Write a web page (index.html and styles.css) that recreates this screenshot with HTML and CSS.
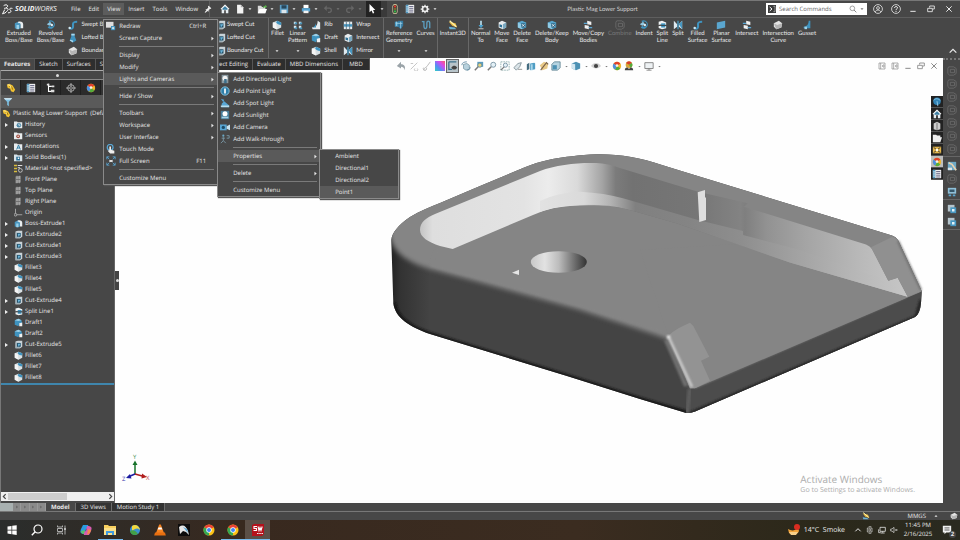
FILE: index.html
```
<!DOCTYPE html>
<html lang="en">
<head>
<meta charset="utf-8">
<title>Plastic Mag Lower Support</title>
<link rel="stylesheet" href="styles.css">
</head>
<body>
<svg class="defs" aria-hidden="true">
  <symbol id="caret" viewBox="0 0 12 12"><path d="M3 4.500h6L6 8z" fill="currentColor"/></symbol>
  <symbol id="arrow" viewBox="0 0 12 12"><path d="M3.500 1.500v9L9 6z" fill="currentColor"/></symbol>
  <symbol id="pin" viewBox="0 0 12 12"><path d="M7 1l4 4-1 1-1-.3L7 8v2L5.500 9 2 11.500 1 11l2.500-3L2 6.500h2L6.300 4 6 2z" fill="#eee"/></symbol>
  <symbol id="home" viewBox="0 0 12 12"><path d="M6 1L1 6l1 .7V11h3V7.500h2V11h3V6.700L11 6z" fill="#e8eef2"/><path d="M3 5.500L6 2.800l3 2.700V7H3z" fill="#3d7fa3"/><path d="M1 6l5-5 5 5" fill="none" stroke="#fff"/></symbol>
  <symbol id="new" viewBox="0 0 12 12"><path d="M2.500 1h4.500l3 3v7.500H2.500z" fill="#f4f4f4"/><path d="M7 1v3h3z" fill="#aaa"/></symbol>
  <symbol id="open" viewBox="0 0 12 12"><path d="M1 2h4l1 1.500h4V11H1z" fill="#d8d8d8"/><path d="M3 6h9l-2 5H1z" fill="#fff"/><path d="M7 5c0-2 1-3 3-3V.8L12 3 10 5V4C9 4 8 4.300 7 5z" fill="#58b04a"/></symbol>
  <symbol id="save" viewBox="0 0 12 12"><path d="M1 1h10v10H1z" fill="#5d9dc4"/><path d="M3 1.500h6v4H3z" fill="#27475c"/><path d="M3 7h6v4H3z" fill="#dce6ec"/></symbol>
  <symbol id="print" viewBox="0 0 12 12"><path d="M3 1h6v4H3z" fill="#fff"/><path d="M1 5h10v4H1z" fill="#58a6d4"/><path d="M3 8h6v3H3z" fill="#f4f4f4"/></symbol>
  <symbol id="undo" viewBox="0 0 12 12"><path d="M3 5h4.500a2.500 2.500 0 010 5H6" fill="none" stroke="#666" stroke-width="1.500"/><path d="M4.500 1.500v7L1 5z" fill="#666"/></symbol>
  <symbol id="redo" viewBox="0 0 12 12"><path d="M9 5H4.500a2.500 2.500 0 000 5H6" fill="none" stroke="#666" stroke-width="1.500"/><path d="M7.500 1.500v7L11 5z" fill="#666"/></symbol>
  <symbol id="cursor" viewBox="0 0 12 12"><path d="M3 0v10l2.500-2.300L7 11.500l1.700-.8L7.300 7.200H10z" fill="#fff"/></symbol>
  <symbol id="traffic" viewBox="0 0 12 12"><rect x="3" width="6" height="12" rx="3" fill="#e9dfae"/><rect x="3.800" y=".8" width="4.400" height="10.400" rx="2" fill="#333"/><circle cx="6" cy="3" r="1.400" fill="#e23b2e"/><circle cx="6" cy="6" r="1.200" fill="#8c7a30"/><circle cx="6" cy="9" r="1.400" fill="#39b54a"/></symbol>
  <symbol id="list" viewBox="0 0 12 12"><path d="M1 1h10v10H1z" fill="#f1f1f1"/><path d="M1 1h3v10H1z" fill="#4b94bd"/><path d="M5 3h5M5 5.200h5M5 7.400h5M5 9.600h5" stroke="#557"/><path d="M1.500 3.500h2M1.500 6h2M1.500 8.500h2" stroke="#fff"/></symbol>
  <symbol id="gear" viewBox="0 0 12 12"><circle cx="6" cy="6" r="3" fill="none" stroke="#f0f0f0" stroke-width="2"/><path d="M6 .8v2M6 9.200v2M.8 6h2M9.200 6h2M2.300 2.300l1.400 1.400M8.300 8.300l1.400 1.400M2.300 9.700l1.400-1.400M8.300 3.700l1.400-1.400" stroke="#f0f0f0" stroke-width="1.500"/></symbol>
  <symbol id="prompt" viewBox="0 0 12 12"><path d="M0 0h12v12H0z" fill="#3b3b3b"/><path d="M2.500 3L6 6 2.500 9" fill="none" stroke="#fff" stroke-width="1.500"/><path d="M8 2h2.500v8H8" fill="none" stroke="#bbb"/></symbol>
  <symbol id="search" viewBox="0 0 12 12"><circle cx="5" cy="5" r="3.500" fill="none" stroke="currentColor"/><path d="M7.500 7.500L11 11" stroke="currentColor" stroke-width="1.300"/></symbol>
  <symbol id="user" viewBox="0 0 12 12"><circle cx="6" cy="6" r="5.300" fill="none" stroke="#e4e4e4"/><circle cx="6" cy="4.800" r="1.700" fill="none" stroke="#e4e4e4"/><path d="M2.700 9.500C3.500 6.600 8.500 6.600 9.300 9.500" fill="none" stroke="#e4e4e4"/></symbol>
  <symbol id="help" viewBox="0 0 12 12"><circle cx="6" cy="6" r="5.300" fill="none" stroke="#e4e4e4"/><path d="M4.300 4.800c0-2.400 3.500-2.200 3.500-.3C7.800 5.800 6 5.800 6 7.300M6 8.300v1.200" fill="none" stroke="#f4f4f4" stroke-width="1.200"/></symbol>
  <symbol id="min" viewBox="0 0 12 12"><path d="M2 9.500h8" stroke="currentColor" stroke-width="1.500"/></symbol>
  <symbol id="restore" viewBox="0 0 12 12"><path d="M4 4V1.500h7V6H8.500M1 5h7v5H1z" fill="none" stroke="currentColor" stroke-width="1.300"/></symbol>
  <symbol id="close" viewBox="0 0 12 12"><path d="M2 2l8 8M10 2l-8 8" stroke="currentColor" stroke-width="1.500"/></symbol>
  <symbol id="dock" viewBox="0 0 12 12"><path d="M1.500 1.500h9v9h-9zM4 1.500v9M9 4L6 6l3 2z" fill="none" stroke="currentColor"/></symbol>

  <symbol id="extrude" viewBox="0 0 12 12"><path d="M1 4l4-2 3 1v7l-3 1-4-1z" fill="#4b97c0"/><path d="M5 2c4-1 6 1 6 3v5H8V6C8 4 7 3 5 4z" fill="#e9eef0"/><path d="M3 6h3v5H3z" fill="#9bd0e8"/></symbol>
  <symbol id="revolve" viewBox="0 0 12 12"><path d="M3 1a5 5 0 11-1 8l2-2a3 3 0 10 0-4z" fill="#3f93bf"/><path d="M1 5l4-3 2 3-3 2z" fill="#8fc7e2"/><circle cx="7" cy="6" r="1.500" fill="#dcecf4"/></symbol>
  <symbol id="swept" viewBox="0 0 12 12"><path d="M2 10c5 2 4-3 4-5 0-3 2-3 5-3" fill="none" stroke="#3f93bf" stroke-width="2.500"/><circle cx="2" cy="9.500" r="1.500" fill="#cde7f2"/></symbol>
  <symbol id="loft" viewBox="0 0 12 12"><path d="M4 1h4v3l2 5-4 2.500L2 9l2-5z" fill="#3f93bf"/><path d="M4 1h4v2H4zM3 8l3 1v2.500L2 9z" fill="#a9d6ea"/></symbol>
  <symbol id="boundary" viewBox="0 0 12 12"><path d="M1 4l6-3 4 3-1 5-6 2-3-3z" fill="#e4e4e4"/><path d="M1 4l4 2 6-2-1 5-6 2z" fill="#b5b5b5"/></symbol>
  <symbol id="cut" viewBox="0 0 12 12"><path d="M2 2l3-1h6v8l-3 2H2z" fill="#c9d3d8"/><path d="M2 3.500h6V11H2z" fill="#9fb0b8"/><path d="M4 4h5v5H4z" fill="#25526b"/><path d="M5 5h4L6 9z" fill="#6cb6db"/></symbol>
  <symbol id="fillet" viewBox="0 0 12 12"><path d="M1 3l5-2 5 2v6l-5 2.500L1 9z" fill="#d9e0e3"/><path d="M6 1l5 2v3C8 6 6 5 5 3z" fill="#3f93bf"/><path d="M1 3l4 1 1 7.500L1 9z" fill="#f4f4f4"/></symbol>
  <symbol id="pattern" viewBox="0 0 12 12"><path d="M1 2h3v3H1zM7 2h3v3H7zM1 7h3v3H1zM7 7h3v3H7z" fill="#d6e7ef"/><path d="M2 3h3v2H2zM8 3h3v2H8zM2 9h3v2H2zM8 9h3v2H8z" fill="#4794bb"/></symbol>
  <symbol id="rib" viewBox="0 0 12 12"><path d="M8 1l3 2v8H2L1 9c5 0 7-3 7-8z" fill="#e6ecef"/><path d="M6 4v5H2c2-1 3-2 4-5z" fill="#3f93bf"/></symbol>
  <symbol id="draft" viewBox="0 0 12 12"><path d="M1 3l5-2 4 2 1 6-4-1-1 3-5-2z" fill="#3f93bf"/><path d="M7 7l4-1v5H7z" fill="#f0f0f0"/><path d="M1 3l5-2 4 2-4 1z" fill="#9fd0e6"/></symbol>
  <symbol id="wrap" viewBox="0 0 12 12"><path d="M1 2h10v9H1z" fill="#e6ecef"/><path d="M1 5h10v3H1z" fill="#4898c2"/><path d="M4 2v9M8 2v9" stroke="#4f6f80"/></symbol>
  <symbol id="mirror" viewBox="0 0 12 12"><path d="M1 1l4 4v3l-4 3zM11 1L7 5v3l4 3z" fill="#dfeaf0"/><path d="M6 1v10" stroke="#49a0cc" stroke-width="1.500"/><path d="M7 5l4-4v10z" fill="#4898c2"/></symbol>
  <symbol id="refgeo" viewBox="0 0 12 12"><path d="M1 2h6v6H1z" fill="#4898c2"/><path d="M5 1h6v6l-3 4-3-3z" fill="#3479a0"/><path d="M3 2v5M8 2v8M2 4h8" stroke="#9fd0e6"/></symbol>
  <symbol id="curve" viewBox="0 0 12 12"><path d="M1 2h2.500v5c0 4.500 3.500 4.500 3.500 0V4c0-3.500 3.500-3.500 3.500 0v6" fill="none" stroke="#5c9cbd" stroke-width="1.600"/></symbol>
  <symbol id="instant" viewBox="0 0 12 12"><path d="M1 2l8 2 2 5-6-2z" fill="#e6b83c"/><path d="M2 1l8 7" stroke="#fff2b0" stroke-width="1.500"/><path d="M1 8l7 1 2 2H2z" fill="#6ab0d4"/></symbol>
  <symbol id="normal" viewBox="0 0 12 12"><path d="M6 1v7" stroke="#b9dff0" stroke-width="2"/><path d="M3 6l3 4 3-4z" fill="#49a0cc"/><path d="M3 10.500h6" stroke="#ddd"/></symbol>
  <symbol id="cube" viewBox="0 0 12 12"><path d="M2 3l4-2 5 2v6l-4 2-5-2z" fill="#e8ecee"/><path d="M7 5l4-2v6l-4 2z" fill="#7ba9c0"/><path d="M3 5l3 1v3L3 8z" fill="#2c6f94"/></symbol>
  <symbol id="bluecube" viewBox="0 0 12 12"><path d="M1 3l5-2 5 2v6l-5 2-5-2z" fill="#57a5cc"/><path d="M1 3l5 2v6L1 9z" fill="#8fcbe6"/><path d="M5 4h5v5H5z" fill="#2b617f"/><path d="M6 5l3 3M9 5L6 8" stroke="#fff"/></symbol>
  <symbol id="move" viewBox="0 0 12 12"><path d="M5 1l5 1v4L5 5zM2 6l5 1v4L2 10z" fill="#f0f0f0"/><path d="M1 4h4M7 9h4" stroke="#58a6d4" stroke-width="1.500"/></symbol>
  <symbol id="split" viewBox="0 0 12 12"><path d="M2 2l4-1 5 2v3L6 5l-4 1zM2 7l4-1 5 1v3L6 11 2 9.500z" fill="#eef2f4"/><path d="M5 4h5v5H5z" fill="#3f93bf"/><path d="M2 6.500h9" stroke="#333"/></symbol>
  <symbol id="planar" viewBox="0 0 12 12"><path d="M1 3l10-2v8L1 11z" fill="#5aa6cf"/></symbol>
  <symbol id="gusset" viewBox="0 0 12 12"><path d="M8 1h2v9H2V8c4 0 6-3 6-7z" fill="#3f93bf"/><path d="M3 8h3v3H3z" fill="#9fd0e6"/></symbol>

  <symbol id="part" viewBox="0 0 12 12"><path d="M1 2l3-1 4 2 3 5-2 3-3-1-1-3-3-1z" fill="#f1c232"/><path d="M4 4l3 1 1 3" fill="none" stroke="#8a6200"/><path d="M2 2l3 1 1 3" fill="none" stroke="#fff3a8"/></symbol>
  <symbol id="config" viewBox="0 0 12 12"><path d="M3 1v9h3M3 4h4" fill="none" stroke="#fff" stroke-width="1.300"/><path d="M7 3h3v2H7zM6 8h4v3H6zM1 1h3v2H1z" fill="#ddd"/></symbol>
  <symbol id="target" viewBox="0 0 12 12"><circle cx="6" cy="6" r="4" fill="none" stroke="#bbb"/><path d="M6 0v12M0 6h12" stroke="#bbb"/><circle cx="6" cy="6" r="1.500" fill="#333" stroke="#ccc" stroke-width=".6"/></symbol>
  <symbol id="wheel" viewBox="0 0 12 12"><circle cx="6" cy="6" r="5" fill="#f0b62c"/><path d="M6 6L2 3a5 5 0 018 0z" fill="#e2402c"/><path d="M6 6L2 3a5 5 0 002 7.600z" fill="#4c8fe0"/><path d="M6 6l-2 4.600a5 5 0 006-2z" fill="#52ad3c"/><circle cx="6" cy="5.500" r="1.600" fill="#f4f4e8"/></symbol>
  <symbol id="filter" viewBox="0 0 12 12"><path d="M1 1.500h10L7 6v5L5 9.500V6z" fill="#7fc0e2"/><path d="M1 1.500h10L9.500 3h-7z" fill="#e2f2fa"/></symbol>
  <symbol id="history" viewBox="0 0 12 12"><path d="M0 2h4l1 1h6v8H0z" fill="#e8ecee"/><circle cx="6.500" cy="7" r="3" fill="#4c88a8"/><path d="M6.500 5v2h2" fill="none" stroke="#fff"/></symbol>
  <symbol id="sensor" viewBox="0 0 12 12"><path d="M0 2h4l1 1h6v8H0z" fill="#e8ecee"/><circle cx="5.500" cy="7" r="2.500" fill="#a04a3c"/><circle cx="5.500" cy="7" r="1" fill="#fff"/></symbol>
  <symbol id="annot" viewBox="0 0 12 12"><path d="M0 2h4l1 1h6v8H0z" fill="#e8ecee"/><path d="M3.500 10L6 4l2.500 6M4.500 8h3" fill="none" stroke="#2f7ea8" stroke-width="1.300"/></symbol>
  <symbol id="bodies" viewBox="0 0 12 12"><path d="M0 2h4l1 1h6v8H0z" fill="#d8e4ea"/><path d="M3 5h5v5H3z" fill="#2b6f96"/><path d="M5 6h2v2H5z" fill="#fff"/></symbol>
  <symbol id="material" viewBox="0 0 12 12"><path d="M0 2h4M0 6h4M0 10h4" stroke="#d8bb3c" stroke-width="2"/><path d="M5 2h6M5 5h3" stroke="#ddd" stroke-width="1.500"/><circle cx="8.500" cy="8.500" r="2.500" fill="none" stroke="#ddd"/></symbol>
  <symbol id="plane" viewBox="0 0 12 12"><path d="M2 2l7-1v9l-7 1z" fill="#8a8a8a"/><path d="M4 1v10M7 1v10" stroke="#bbb"/><path d="M2 6h7" stroke="#666"/></symbol>
  <symbol id="origin" viewBox="0 0 12 12"><path d="M2 1v8h9" fill="none" stroke="#aaa" stroke-width="1.200"/><circle cx="2" cy="9" r="1.800" fill="#555" stroke="#bbb"/></symbol>

  <symbol id="redraw" viewBox="0 0 12 12"><path d="M0 1h9v7H0z" fill="#dedede"/><path d="M6 6h5v5H6z" fill="#3f93bf"/><path d="M7 8.500h3M8.500 7v3" stroke="#fff"/></symbol>
  <symbol id="touch" viewBox="0 0 12 12"><circle cx="5" cy="4" r="3.500" fill="none" stroke="#58a6d4" stroke-width="1.500"/><path d="M4 3h2v4l4 1v3.500H5L2 8l2-.5z" fill="#eee"/></symbol>
  <symbol id="full" viewBox="0 0 12 12"><path d="M1 4V1h3M8 1h3v3M11 8v3H8M4 11H1V8M1 1l3 3M11 1L8 4M1 11l3-3M11 11L8 8" fill="none" stroke="#58a6d4"/><path d="M4 5h4v2H4z" fill="#fff"/></symbol>
  <symbol id="light" viewBox="0 0 12 12"><path d="M2 1h8v10H2z" fill="#8a9aa2"/><circle cx="6" cy="5" r="3" fill="#f2f2f2"/><path d="M5 6h3v5H5z" fill="#3c6f8c"/></symbol>
  <symbol id="point" viewBox="0 0 12 12"><circle cx="6" cy="6" r="5" fill="#2f7ea8" stroke="#8fcbe6"/><path d="M5 3h2v6H5z" fill="#fff"/></symbol>
  <symbol id="spot" viewBox="0 0 12 12"><path d="M1 1l4 1-1 3zM2 7l3-3 6 5v2H2z" fill="#58a6d4"/><path d="M1 9h10v2H1z" fill="#b7dced"/></symbol>
  <symbol id="sun" viewBox="0 0 12 12"><path d="M1 1h10v10H1z" fill="#487f9c"/><circle cx="6" cy="4.500" r="3" fill="#fff"/><path d="M2 8h8v2H2z" fill="#a7d4e8"/></symbol>
  <symbol id="camera" viewBox="0 0 12 12"><path d="M0 3h8v7H0z" fill="#58a6d4"/><path d="M8 5l4-2v7L8 8z" fill="#c7e2ee"/><circle cx="4" cy="6.500" r="2" fill="#1e4c66"/></symbol>
  <symbol id="walk" viewBox="0 0 12 12"><circle cx="4" cy="2" r="1.300" fill="#6aa8c6"/><path d="M4 4v4l-3 3M4 8l3 3M2 5h4M8 2h3v3H8" fill="none" stroke="#7d9dad"/></symbol>

  <symbol id="h-arrow" viewBox="0 0 12 12"><path d="M1 6l5-5v3c4 0 6 3 4 7 0-3-2-4-4-4v2z" fill="#9aa3a8"/></symbol>
  <symbol id="h-line" viewBox="0 0 12 12"><path d="M2 10L10 2M2 3h3M7 9a2 2 0 103 0" fill="none" stroke="#bcbcbc"/></symbol>
  <symbol id="h-edge" viewBox="0 0 12 12"><path d="M2 11c1-4 4-3 5-6l3-4M2 8a2 2 0 103 0" fill="none" stroke="#bcbcbc" stroke-width="1.200"/></symbol>
  <symbol id="h-rainbow" viewBox="0 0 12 12"><path d="M0 0h12v12H0z" fill="url(#g-hue)"/></symbol>
  <symbol id="h-view" viewBox="0 0 12 12"><path d="M1 1v9h4M1 1h9" fill="none" stroke="#3a6f8a" stroke-width="1.500"/><path d="M4 8c2-3 5-3 7 0-2 3-5 3-7 0z" fill="#444"/></symbol>
  <symbol id="h-rotate" viewBox="0 0 12 12"><path d="M3 4l4-1 3 2v5l-4 1-3-2z" fill="#b8d2de" stroke="#6a8c9c" stroke-width=".8"/><path d="M1 5c0-3 3-4 6-4M11 7c0 3-2 4-4 4" fill="none" stroke="#5c87a0"/></symbol>
  <symbol id="h-zoomsel" viewBox="0 0 12 12"><path d="M4 1h7v6H4z" fill="#5a9dc0"/><circle cx="7" cy="5" r="2.500" fill="#e6d27a" stroke="#5c87a0"/><path d="M5 7l-4 4" stroke="#7a7a7a" stroke-width="1.800"/></symbol>
  <symbol id="h-zoom" viewBox="0 0 12 12"><circle cx="7.500" cy="4.500" r="3" fill="#e4f0f6" stroke="#6f8c9c"/><path d="M5 7l-4 4" stroke="#7a7a7a" stroke-width="1.800"/></symbol>
  <symbol id="h-area" viewBox="0 0 12 12"><path d="M1 1h10v10H1z" fill="none" stroke="#8aa" stroke-dasharray="2 1"/><circle cx="6.500" cy="5" r="2.500" fill="#e4f0f6" stroke="#6f8c9c"/><path d="M5 7l-4 4" stroke="#777" stroke-width="1.500"/></symbol>
  <symbol id="h-prev" viewBox="0 0 12 12"><path d="M1 8l5-5 4-1-2 5-4 4z" fill="#dbe4e8" stroke="#7b8c94"/><path d="M6 10h5" stroke="#888"/></symbol>
  <symbol id="h-section" viewBox="0 0 12 12"><path d="M1 4l3-2v8l-3 1z" fill="#456c80"/><path d="M5 3l5-1 1 1v7l-6 1z" fill="#4f9dc4"/><path d="M6 4h2v7H6z" fill="#a9d6ea"/></symbol>
  <symbol id="h-measure" viewBox="0 0 12 12"><path d="M1 5l5-4 5 2-1 6-6 2z" fill="#e8c987"/><path d="M2 11l7-9 2 2" fill="none" stroke="#77614a" stroke-width="1.300"/></symbol>
  <symbol id="h-box" viewBox="0 0 12 12"><path d="M1 4l3-3h7v7l-3 3H1z" fill="#b5d3e0" stroke="#47707f" stroke-width=".8"/><path d="M2 5h5v5H2z" fill="#4c91b3"/></symbol>
  <symbol id="h-shade" viewBox="0 0 12 12"><path d="M1 3l5-2 5 2v6l-5 2-5-2z" fill="#4c91b3"/><path d="M1 3l4 1v7L1 9z" fill="#d3e7f0"/></symbol>
  <symbol id="h-eye" viewBox="0 0 12 12"><path d="M0 6c3-5 9-5 12 0-3 4-9 4-12 0z" fill="#d0d0d0"/><circle cx="6" cy="6" r="2.500" fill="#444"/></symbol>
  <symbol id="h-scene" viewBox="0 0 12 12"><circle cx="6" cy="4.500" r="4" fill="#d9a83a"/><path d="M6 4.500L2.500 2.500a4 4 0 017 0z" fill="#d8402c"/><path d="M6 4.500l3.500-2a4 4 0 01-1.500 5.500z" fill="#52ad3c"/><path d="M1 11c0-4 4-4 5-1 1-3 5-3 5 1z" fill="#444"/></symbol>
  <symbol id="h-screen" viewBox="0 0 12 12"><path d="M1 2h10v7H1z" fill="#eef2f4" stroke="#777"/><path d="M6 9v2M3 11h6" stroke="#777"/></symbol>

  <symbol id="t-globe" viewBox="0 0 12 12"><circle cx="6" cy="5" r="4.500" fill="#3182b4"/><path d="M2 4c3-3 5-2 8 0M6 5l1 6" fill="none" stroke="#9ad0ea"/></symbol>
  <symbol id="t-folder" viewBox="0 0 12 12"><path d="M1 2h4l1 1h4v2h2l-2 6H1z" fill="#eee"/></symbol>
  <symbol id="t-books" viewBox="0 0 12 12"><path d="M2 3l4-2 4 2v7l-4 1-4-1z" fill="#ccc"/><path d="M6 2v9" stroke="#666"/></symbol>
  <symbol id="t-palette" viewBox="0 0 12 12"><path d="M1 2h10v8H1z" fill="#e0b44c"/><path d="M2 3l3 2M10 3L7 5M2 9l3-2M10 9L7 7" stroke="#333"/><circle cx="6" cy="6" r="1.500" fill="#fff"/></symbol>
  <symbol id="r-off" viewBox="0 0 12 12"><path d="M2 1h6l3 2v6l-3 2H3L1 9V3z" fill="none" stroke="#6c6c6c"/><path d="M4 4h5v4H4z" fill="none" stroke="#6c6c6c"/></symbol>
  <symbol id="r-on" viewBox="0 0 12 12"><path d="M1 1h8v8H1z" fill="#b4c4cc"/><path d="M4 4h7v7H4z" fill="#4898c2"/><path d="M6 6h3v3H6z" fill="#e4f2f8"/></symbol>
  <symbol id="r-image" viewBox="0 0 12 12"><path d="M1 1h10v10H1z" fill="#6da9c6"/><path d="M2 2l4 2 5 7" fill="none" stroke="#e8d2b0" stroke-width="2"/><path d="M1 8h5v3H1z" fill="#dce6ea"/></symbol>
  <symbol id="r-display" viewBox="0 0 12 12"><path d="M1 1h10v7H1z" fill="#8fc0d8"/><path d="M3 3h6v3H3z" fill="#35576a"/><path d="M2 9h3v2H2zM7 9h3v2H7z" fill="#5aa6cf"/></symbol>

  <symbol id="k-win" viewBox="0 0 12 12"><path d="M1.500 2.500l4-.6v3.800h-4zM6.200 1.800l4.500-.6v4.500H6.200zM1.500 6.400h4v3.800l-4-.6zM6.200 6.400h4.500v4.500l-4.500-.6z" fill="#fff"/></symbol>
  <symbol id="k-search" viewBox="0 0 12 12"><circle cx="7" cy="5" r="4" fill="none" stroke="#fff" stroke-width="1.200"/><path d="M4.200 7.800L.8 11.200" stroke="#fff" stroke-width="1.400"/></symbol>
  <symbol id="k-tasks" viewBox="0 0 12 12"><path d="M2.500 4.500h5v3h-5zM2.500 1.500V3h5V1.500M2.500 10.500V9h5v1.500M10 1.500v9" fill="none" stroke="#bbb" stroke-width=".9"/><path d="M9.200 4h1.600v2H9.200z" fill="#ccc"/></symbol>
  <symbol id="k-copilot" viewBox="0 0 12 12"><path d="M3 1h5l1 3-3 1-1 5H3C0 9 0 8 1 5z" fill="#2a9be0"/><path d="M9 11H4l-1-3 3-1 1-5h2c3 1 3 2 2 5z" fill="#d65bb0"/><path d="M1 7l4-1-1 4c-2 0-3-1-3-3z" fill="#58c26a"/><path d="M8 5l3 1-1 3-3 2z" fill="#f08c4a"/></symbol>
  <symbol id="k-folder" viewBox="0 0 12 12"><path d="M0 1h4l1 1h7v9H0z" fill="#f7cf5e"/><path d="M0 4h12v7H0z" fill="#fbe08a"/><path d="M2 7h8v4H8V9H4v2H2z" fill="#3f9ae0"/></symbol>
  <symbol id="k-idm" viewBox="0 0 12 12"><circle cx="6" cy="6" r="5" fill="#3a8fd0"/><path d="M3 2c5-3 8 2 8 4-3-3-5-1-8 1z" fill="#f3d83c"/><path d="M1 7c3-2 6 0 8 3-4 2-7 1-8-3z" fill="#43a047"/></symbol>
  <symbol id="k-vlc" viewBox="0 0 12 12"><path d="M5.200.5h1.600L10 9H2z" fill="#f58220"/><path d="M4.400 3.500h3.200l.7 2H3.700z" fill="#fff"/><path d="M1 8.500h10l.8 3H.2z" fill="#e86f10"/></symbol>
  <symbol id="k-game" viewBox="0 0 12 12"><path d="M0 0h12v12H0z" fill="#0c0c0c"/><path d="M1 3c4-3 7-1 9 4l1 4-3-3-3-1-3 3z" fill="#e6e6e6"/><path d="M5 3l4 2 1 4z" fill="#58a6d4"/></symbol>
  <symbol id="k-chrome" viewBox="0 0 12 12"><circle cx="6" cy="6" r="5.500" fill="#fbc116"/><path d="M6 6L1.200 3.300a5.500 5.500 0 019.600 0z" fill="#ea4335"/><path d="M6 6L1.200 3.300A5.500 5.500 0 006 11.500z" fill="#34a853"/><circle cx="6" cy="6" r="2.700" fill="#fff"/><circle cx="6" cy="6" r="2" fill="#4285f4"/></symbol>
  <symbol id="k-sw" viewBox="0 0 12 12"><path d="M0 1l2-1h10v10l-2 2H0z" fill="#b5121b"/><path d="M5 2.500H2v2h2.500v2H1.500M6 2.500l1 4 1-3 1 3 1.200-4" fill="none" stroke="#fff" stroke-width="1.100"/><path d="M5 9.500h6" stroke="#eee" stroke-width="1.200" stroke-dasharray="1.200 .4"/></symbol>
  <symbol id="k-weather" viewBox="0 0 12 12"><path d="M0 5c3 2 7 2 10-1l1 3c-1 4-7 5-10 2z" fill="#f2a33a"/><path d="M1 8h9l-2 3H3z" fill="#f7cf8a"/><circle cx="9" cy="3" r="3" fill="#d92c20"/></symbol>
  <symbol id="k-up" viewBox="0 0 12 12"><path d="M2 8l4-4 4 4" fill="none" stroke="#e8e8e8" stroke-width="1.500"/></symbol>
  <symbol id="k-meet" viewBox="0 0 12 12"><path d="M2 3h7v6H2zM4 1h4M4 11h4" fill="none" stroke="#ddd"/><circle cx="5.500" cy="6" r="1.500" fill="none" stroke="#ddd"/></symbol>
  <symbol id="k-net" viewBox="0 0 12 12"><path d="M3 2h8v6H3zM7 8v2M4 10.500h6M1 5v5h3" fill="none" stroke="#e4e4e4" stroke-width="1.200"/></symbol>
  <symbol id="k-mute" viewBox="0 0 12 12"><path d="M1 4.500h2L6 2v8L3 7.500H1z" fill="none" stroke="#e4e4e4"/><path d="M8 4.500l3 3M11 4.500l-3 3" stroke="#e4e4e4"/></symbol>
  <symbol id="k-note" viewBox="0 0 12 12"><path d="M1 1h10v8H5l-2 2V9H1z" fill="#f0f0f0"/><path d="M3 3.500h6M3 6h6" stroke="#444"/></symbol>
  <linearGradient id="g-hue" x1="0" y1="1" x2="1" y2="0"><stop offset="0" stop-color="#2fd0c0"/><stop offset=".35" stop-color="#5a8cf5"/><stop offset=".65" stop-color="#d04df0"/><stop offset="1" stop-color="#ff5a6c"/></linearGradient>
</svg>

<div class="app">
  <header class="titlebar">
    <div class="brand">
      <svg class="mark" viewBox="0 0 20 20" aria-hidden="true"><path d="M3 3c4-3 10-1 6 3-1 1-3 2-5 2M8 8c4 0 4 2 1 5-2 3-5 4-8 5l4-8M19 8c-5-1-6 1-4 3s2 5-4 5" fill="none" stroke="#fff" stroke-width="1.800"/></svg>
      <span class="wordmark"><b>SOLID</b>WORKS</span>
    </div>
    <nav class="menubar">
      <button>File</button>
      <button>Edit</button>
      <div class="menu-host">
        <button class="open">View</button>
        <ul class="menu menu-view">
          <li><button><svg><use href="#redraw"/></svg><span>Redraw</span><kbd>Ctrl+R</kbd></button></li>
          <li><button><span>Screen Capture</span><svg class="more"><use href="#arrow"/></svg></button></li>
          <li class="sep"></li>
          <li><button><span>Display</span><svg class="more"><use href="#arrow"/></svg></button></li>
          <li><button><span>Modify</span><svg class="more"><use href="#arrow"/></svg></button></li>
          <li><button class="active"><span>Lights and Cameras</span><svg class="more"><use href="#arrow"/></svg></button>
            <ul class="menu menu-lights">
              <li><button><svg><use href="#light"/></svg><span>Add Directional Light</span></button></li>
              <li><button><svg><use href="#point"/></svg><span>Add Point Light</span></button></li>
              <li><button><svg><use href="#spot"/></svg><span>Add Spot Light</span></button></li>
              <li><button><svg><use href="#sun"/></svg><span>Add Sunlight</span></button></li>
              <li><button><svg><use href="#camera"/></svg><span>Add Camera</span></button></li>
              <li><button><svg><use href="#walk"/></svg><span>Add Walk-through</span></button></li>
              <li class="sep"></li>
              <li><button class="active"><span>Properties</span><svg class="more"><use href="#arrow"/></svg></button>
                <ul class="menu menu-props">
                  <li><button><span>Ambient</span></button></li>
                  <li><button><span>Directional1</span></button></li>
                  <li><button><span>Directional2</span></button></li>
                  <li><button class="active"><span>Point1</span></button></li>
                </ul>
              </li>
              <li class="sep"></li>
              <li><button><span>Delete</span><svg class="more"><use href="#arrow"/></svg></button></li>
              <li class="sep"></li>
              <li><button><span>Customize Menu</span></button></li>
            </ul>
          </li>
          <li class="sep"></li>
          <li><button><span>Hide / Show</span><svg class="more"><use href="#arrow"/></svg></button></li>
          <li class="sep"></li>
          <li><button><span>Toolbars</span><svg class="more"><use href="#arrow"/></svg></button></li>
          <li><button><span>Workspace</span><svg class="more"><use href="#arrow"/></svg></button></li>
          <li><button><span>User Interface</span><svg class="more"><use href="#arrow"/></svg></button></li>
          <li><button><svg><use href="#touch"/></svg><span>Touch Mode</span></button></li>
          <li><button><svg><use href="#full"/></svg><span>Full Screen</span><kbd>F11</kbd></button></li>
          <li class="sep"></li>
          <li><button><span>Customize Menu</span></button></li>
        </ul>
      </div>
      <button>Insert</button>
      <button>Tools</button>
      <button>Window</button>
      <button class="pin" aria-label="Pin menu"><svg><use href="#pin"/></svg></button>
    </nav>
    <div class="quick">
      <button class="home" aria-label="Home"><svg><use href="#home"/></svg></button>
      <button aria-label="New"><svg><use href="#new"/></svg><svg class="drop"><use href="#caret"/></svg></button>
      <button aria-label="Open"><svg><use href="#open"/></svg><svg class="drop"><use href="#caret"/></svg></button>
      <button aria-label="Save"><svg><use href="#save"/></svg><svg class="drop"><use href="#caret"/></svg></button>
      <button aria-label="Print"><svg><use href="#print"/></svg><svg class="drop"><use href="#caret"/></svg></button>
      <button class="off" aria-label="Undo"><svg><use href="#undo"/></svg><svg class="drop"><use href="#caret"/></svg></button>
      <button class="off" aria-label="Redo"><svg><use href="#redo"/></svg><svg class="drop"><use href="#caret"/></svg></button>
      <button class="pressed" aria-label="Select"><svg><use href="#cursor"/></svg><svg class="drop"><use href="#caret"/></svg></button>
      <button class="lone" aria-label="Rebuild"><svg><use href="#traffic"/></svg></button>
      <button class="lone" aria-label="File properties"><svg><use href="#list"/></svg></button>
      <button aria-label="Options"><svg><use href="#gear"/></svg><svg class="drop"><use href="#caret"/></svg></button>
    </div>
    <h1>Plastic Mag Lower Support</h1>
    <label class="search">
      <svg><use href="#prompt"/></svg>
      <input type="text" placeholder="Search Commands" aria-label="Search Commands">
      <svg><use href="#search"/></svg><svg class="drop"><use href="#caret"/></svg>
    </label>
    <div class="window-buttons">
      <button aria-label="Account"><svg class="round"><use href="#user"/></svg></button>
      <button aria-label="Help"><svg class="round"><use href="#help"/></svg></button>
      <button aria-label="Minimize"><svg><use href="#min"/></svg></button>
      <button aria-label="Restore"><svg><use href="#restore"/></svg></button>
      <button aria-label="Close"><svg><use href="#close"/></svg></button>
    </div>
  </header>

  <section class="ribbon">
    <div class="group boss">
      <button class="tool"><svg><use href="#extrude"/></svg>Extruded<br>Boss/Base</button>
      <button class="tool"><svg><use href="#revolve"/></svg>Revolved<br>Boss/Base</button>
      <div class="stack">
        <button><svg><use href="#swept"/></svg>Swept Bos</button>
        <button><svg><use href="#loft"/></svg>Lofted Bo</button>
        <button><svg><use href="#boundary"/></svg>Boundary</button>
      </div>
    </div>
    <div class="group cuts">
      <div class="stack">
        <button><svg><use href="#cut"/></svg>Swept Cut</button>
        <button><svg><use href="#cut"/></svg>Lofted Cut</button>
        <button><svg><use href="#cut"/></svg>Boundary Cut</button>
      </div>
    </div>
    <div class="group features">
      <button class="tool"><svg><use href="#fillet"/></svg>Fillet<svg class="drop"><use href="#caret"/></svg></button>
      <button class="tool"><svg><use href="#pattern"/></svg>Linear<br>Pattern<svg class="drop"><use href="#caret"/></svg></button>
      <div class="stack">
        <button><svg><use href="#rib"/></svg>Rib</button>
        <button><svg><use href="#draft"/></svg>Draft</button>
        <button><svg><use href="#fillet"/></svg>Shell</button>
      </div>
      <div class="stack">
        <button><svg><use href="#wrap"/></svg>Wrap</button>
        <button><svg><use href="#cube"/></svg>Intersect</button>
        <button><svg><use href="#mirror"/></svg>Mirror</button>
      </div>
    </div>
    <div class="group">
      <button class="tool"><svg><use href="#refgeo"/></svg>Reference<br>Geometry<svg class="drop"><use href="#caret"/></svg></button>
      <button class="tool"><svg><use href="#curve"/></svg>Curves<svg class="drop"><use href="#caret"/></svg></button>
    </div>
    <div class="group">
      <button class="tool"><svg><use href="#instant"/></svg>Instant3D</button>
    </div>
    <div class="group last">
      <button class="tool"><svg><use href="#normal"/></svg>Normal<br>To</button>
      <button class="tool"><svg><use href="#cube"/></svg>Move<br>Face</button>
      <button class="tool"><svg><use href="#bluecube"/></svg>Delete<br>Face</button>
      <button class="tool"><svg><use href="#bluecube"/></svg>Delete/Keep<br>Body</button>
      <button class="tool"><svg><use href="#move"/></svg>Move/Copy<br>Bodies</button>
      <button class="tool off" disabled><svg><use href="#r-off"/></svg>Combine</button>
      <button class="tool"><svg><use href="#revolve"/></svg>Indent</button>
      <button class="tool"><svg><use href="#split"/></svg>Split<br>Line</button>
      <button class="tool"><svg><use href="#mirror"/></svg>Split</button>
      <button class="tool"><svg><use href="#swept"/></svg>Filled<br>Surface</button>
      <button class="tool"><svg><use href="#planar"/></svg>Planar<br>Surface</button>
      <button class="tool"><svg><use href="#move"/></svg>Intersect</button>
      <button class="tool"><svg><use href="#boundary"/></svg>Intersection<br>Curve</button>
      <button class="tool"><svg><use href="#gusset"/></svg>Gusset</button>
    </div>
    <button class="collapse" aria-label="Collapse ribbon"><svg><use href="#k-up"/></svg></button>
  </section>

  <main class="workspace">
    <nav class="feature-tabs">
      <button class="current">Features</button>
      <button>Sketch</button>
      <button>Surfaces</button>
      <button class="grow">She</button>
      <button>Direct Editing</button>
      <button>Evaluate</button>
      <button>MBD Dimensions</button>
      <button class="short">MBD</button>
    </nav>

    <aside class="panel">
      <div class="splitter"><i></i></div>
      <div class="panel-tabs">
        <button class="current" aria-label="Feature tree"><svg><use href="#part"/></svg></button>
        <button aria-label="Properties"><svg><use href="#list"/></svg></button>
        <button aria-label="Configurations"><svg><use href="#config"/></svg></button>
        <button aria-label="Dimensions"><svg><use href="#target"/></svg></button>
        <button aria-label="Display"><svg><use href="#wheel"/></svg></button>
      </div>
      <div class="filter"><svg><use href="#filter"/></svg></div>
      <ul class="tree">
        <li class="root"><svg><use href="#part"/></svg>Plastic Mag Lower Support&nbsp; (Defau</li>
        <li class="branch"><svg><use href="#history"/></svg>History</li>
        <li><svg><use href="#sensor"/></svg>Sensors</li>
        <li class="branch"><svg><use href="#annot"/></svg>Annotations</li>
        <li class="branch"><svg><use href="#bodies"/></svg>Solid Bodies(1)</li>
        <li><svg><use href="#material"/></svg>Material &lt;not specified&gt;</li>
        <li><svg><use href="#plane"/></svg>Front Plane</li>
        <li><svg><use href="#plane"/></svg>Top Plane</li>
        <li><svg><use href="#plane"/></svg>Right Plane</li>
        <li><svg><use href="#origin"/></svg>Origin</li>
        <li class="branch"><svg><use href="#extrude"/></svg>Boss-Extrude1</li>
        <li class="branch"><svg><use href="#cut"/></svg>Cut-Extrude2</li>
        <li class="branch"><svg><use href="#cut"/></svg>Cut-Extrude1</li>
        <li class="branch"><svg><use href="#cut"/></svg>Cut-Extrude3</li>
        <li><svg><use href="#fillet"/></svg>Fillet3</li>
        <li><svg><use href="#fillet"/></svg>Fillet4</li>
        <li><svg><use href="#fillet"/></svg>Fillet5</li>
        <li class="branch"><svg><use href="#cut"/></svg>Cut-Extrude4</li>
        <li class="branch"><svg><use href="#split"/></svg>Split Line1</li>
        <li><svg><use href="#draft"/></svg>Draft1</li>
        <li><svg><use href="#draft"/></svg>Draft2</li>
        <li class="branch"><svg><use href="#cut"/></svg>Cut-Extrude5</li>
        <li><svg><use href="#fillet"/></svg>Fillet6</li>
        <li><svg><use href="#fillet"/></svg>Fillet7</li>
        <li><svg><use href="#fillet"/></svg>Fillet8</li>
      </ul>
      <div class="rollback"></div>
      <div class="scrollbar">
        <svg viewBox="0 0 12 12"><path d="M8 2L4 6l4 4" fill="none" stroke="#444" stroke-width="2"/></svg>
        <i></i>
        <svg viewBox="0 0 12 12"><path d="M4 2l4 4-4 4" fill="none" stroke="#444" stroke-width="2"/></svg>
      </div>
    </aside>

    <section class="viewport">
      <svg class="model" viewBox="115 58 828 445" role="img" aria-label="Magazine lower support part">
        <defs>
          <clipPath id="body-clip"><path d="M391.300 240C392 233 398 225 410 217C420 211 430 207 440 203L480 186L523 168C540 161 560 156 597 154.300C620 154 640 157.500 662 165L683 171.500L892 235.500Q896 236.500 898 240L921.700 291L921 303Q920 314 915 317L695 411.500Q689 414 683 412L640 399L567 376L430 334C410 327 395 318 393.300 303Z"/></clipPath>
          <filter id="soft" x="-10%" y="-10%" width="120%" height="120%"><feGaussianBlur stdDeviation="2.400"/></filter>
          <filter id="soft1" x="-30%" y="-30%" width="160%" height="160%"><feGaussianBlur stdDeviation="1.100"/></filter>
          <linearGradient id="g-side" gradientUnits="userSpaceOnUse" x1="391" y1="0" x2="430" y2="0"><stop offset="0" stop-color="#222"/><stop offset=".25" stop-color="#333"/><stop offset="1" stop-color="#444"/></linearGradient>
          <linearGradient id="g-wall" gradientUnits="userSpaceOnUse" x1="420" y1="0" x2="627" y2="0"><stop offset="0" stop-color="#c4c4c4"/><stop offset=".06" stop-color="#dedede"/><stop offset=".5" stop-color="#e3e3e3"/><stop offset=".62" stop-color="#ececec"/><stop offset=".76" stop-color="#dadada"/><stop offset=".88" stop-color="#a4a4a4"/><stop offset=".945" stop-color="#7c7c7c"/><stop offset="1" stop-color="#747474"/></linearGradient>
          <linearGradient id="g-right" gradientUnits="userSpaceOnUse" x1="615" y1="0" x2="907" y2="0"><stop offset="0" stop-color="#7c7c7c"/><stop offset=".06" stop-color="#727272"/><stop offset=".28" stop-color="#767676"/><stop offset=".33" stop-color="#7a7a7a"/><stop offset=".43" stop-color="#838383"/><stop offset=".445" stop-color="#7f7f7f"/><stop offset=".52" stop-color="#929292"/><stop offset=".65" stop-color="#a4a4a4"/><stop offset=".85" stop-color="#bababa"/><stop offset="1" stop-color="#c6c6c6"/></linearGradient>
          <linearGradient id="g-ledge" gradientUnits="userSpaceOnUse" x1="540" y1="0" x2="907" y2="0"><stop offset="0" stop-color="#e2e2e2"/><stop offset=".12" stop-color="#dadada"/><stop offset=".19" stop-color="#b4b4b4"/><stop offset=".26" stop-color="#808080"/><stop offset=".4" stop-color="#848484"/><stop offset=".55" stop-color="#8e8e8e"/><stop offset=".7" stop-color="#a2a2a2"/><stop offset=".85" stop-color="#b6b6b6"/><stop offset="1" stop-color="#c6c6c6"/></linearGradient>
          <linearGradient id="g-hole"><stop offset="0" stop-color="#c8c8c8"/><stop offset=".25" stop-color="#e2e2e2"/><stop offset=".5" stop-color="#bcbcbc"/><stop offset=".8" stop-color="#696969"/><stop offset="1" stop-color="#333"/></linearGradient>
        </defs>
        <g clip-path="url(#body-clip)">
          <path d="M385 150H930V420H385z" fill="url(#g-side)"/>
          <path d="M394 303C396 318 412 328 430 334L567 376L640 399L688 413" fill="none" stroke="#181818" stroke-width="4" filter="url(#soft1)"/>
          <path d="M380 140H935V291L692 389L667 339L656 335L580 310L480 282.500L430 269C410 263 394 254 390 238z" fill="#858585" filter="url(#soft)"/>
          <path d="M691 388.500L922 291V320L690 416z" fill="#4c4c4c"/>
          <path d="M683 413L691 413L916 317L921 300" fill="none" stroke="#222" stroke-width="3" filter="url(#soft1)"/>
          <path d="M690 389L687 414" stroke="#5b5b5b" stroke-width="5" filter="url(#soft1)"/>
          <path d="M430 266.500L480 279.500L580 307L656 331L668 336L695 388.300L907 297L800 262L700 215L600 180L450 215z" fill="#858585" filter="url(#soft1)"/>
          <path d="M668.500 336.500L690 388.500L695 388.300L921.700 291.500L900 240L800 240L640 250z" fill="#858585"/>
        </g>
        <path d="M420 230C420 222 426 218 435 214L540 171C558 164 585 162 602 163.500Q610 164.500 616 166.700L628 209.500C608 204 575 204 553 208.300Q543 210.500 533 215L452.700 249L440 246C428 242 420 237 420 230z" fill="url(#g-wall)"/>
        <path d="M615 166.500L670 183.300L698 191.700L748 203.300L744 206.700L866 244.500Q870 246 872 249L888.300 280.700L897.700 277.700L907.700 296.700L790 262.500L677 223.500L627 209.300L615 206.500z" fill="url(#g-right)"/>
        <path d="M540 201Q555 193 580 191.700Q605 193 623 198.300L698 220L743 231V235L800 250L888.300 280.700L907.700 296.700L790 262.500L677 223.500L627 209.300Q605 203.500 573 205.300Q552 207 540 212z" fill="url(#g-ledge)"/>
        <path d="M697.700 192.300L705 190V197L706 198V220L699.300 222z" fill="#dedede"/>
        <path d="M871 247.300L892 237Q897 238 899 243L921.700 291L907.700 296.700L897.700 277.700L888.300 280.700z" fill="#909090"/>
        <path d="M898 241L921 290" stroke="#6f6f6f" stroke-width="2" filter="url(#soft1)"/>
        <path d="M668.300 336.700Q671 331 690 322.700L693.300 326L709.300 356.700L701 360.700L710 380.700L695 388.300L690 388z" fill="#939393"/>
        <path d="M666 340L686 386" stroke="#707070" stroke-width="4" filter="url(#soft1)"/>
        <path d="M669 338L692 387" stroke="#cfcfcf" stroke-width="2.500" filter="url(#soft1)"/>
        <circle cx="668.500" cy="337" r="1.800" fill="#f0f0f0" filter="url(#soft1)"/>
        <ellipse cx="558.800" cy="262" rx="28" ry="10.800" fill="url(#g-hole)"/>
        <path d="M512 272.700L519 269.700V275z" fill="#e6e6e6"/>
        <g class="triad">
          <path d="M135 474V463" stroke="#17722a" stroke-width="1.500"/><path d="M132.500 465L135 460.500L137.500 465z" fill="#17722a"/>
          <path d="M135 474L144 476.500" stroke="#b01c1c" stroke-width="1.500"/><path d="M142 473.500L147 477L141.500 478.500z" fill="#b01c1c"/>
          <path d="M135 474L128 477" stroke="#1c1ca0" stroke-width="1.500"/><path d="M130 474L126 478L131.500 478.500z" fill="#1c1ca0"/>
          <text x="133" y="459" fill="#3a8a48">Y</text><text x="146" y="480" fill="#b83c3c">X</text><text x="122" y="481" fill="#3838a8">Z</text>
        </g>
      </svg>
      <div class="view-tools">
        <button aria-label="Previous"><svg><use href="#h-arrow"/></svg></button>
        <button aria-label="Line"><svg><use href="#h-line"/></svg></button>
        <button aria-label="Edge"><svg><use href="#h-edge"/></svg></button>
        <button aria-label="Curvature"><svg><use href="#h-rainbow"/></svg></button>
        <button class="pressed" aria-label="View selector"><svg><use href="#h-view"/></svg></button>
        <button aria-label="Rotate"><svg><use href="#h-rotate"/></svg></button>
        <button aria-label="Zoom to selection"><svg><use href="#h-zoomsel"/></svg></button>
        <button aria-label="Zoom to fit"><svg><use href="#h-zoom"/></svg></button>
        <button aria-label="Zoom to area"><svg><use href="#h-area"/></svg></button>
        <button aria-label="Previous view"><svg><use href="#h-prev"/></svg></button>
        <button aria-label="Section view"><svg><use href="#h-section"/></svg></button>
        <button aria-label="Annotation views"><svg><use href="#h-measure"/></svg></button>
        <button class="split" aria-label="View orientation"><svg><use href="#h-box"/></svg><svg class="drop"><use href="#caret"/></svg></button>
        <button class="split" aria-label="Display style"><svg><use href="#h-shade"/></svg><svg class="drop"><use href="#caret"/></svg></button>
        <button class="split" aria-label="Hide items"><svg><use href="#h-eye"/></svg><svg class="drop"><use href="#caret"/></svg></button>
        <button aria-label="Appearance"><svg><use href="#wheel"/></svg></button>
        <button class="split" aria-label="Scene"><svg><use href="#h-scene"/></svg><svg class="drop"><use href="#caret"/></svg></button>
        <button class="split" aria-label="View settings"><svg><use href="#h-screen"/></svg><svg class="drop"><use href="#caret"/></svg></button>
      </div>
      <div class="doc-buttons">
        <button aria-label="Dock left"><svg><use href="#dock"/></svg></button>
        <button aria-label="Dock right"><svg><use href="#dock"/></svg></button>
        <button aria-label="Minimize document"><svg><use href="#min"/></svg></button>
        <button aria-label="Restore document"><svg><use href="#restore"/></svg></button>
        <button aria-label="Close document"><svg><use href="#close"/></svg></button>
      </div>
      <button class="panel-handle" aria-label="Collapse panel"><i></i></button>
      <div class="task-tabs">
        <button aria-label="3DEXPERIENCE"><svg><use href="#t-globe"/></svg></button>
        <button aria-label="Resources"><svg><use href="#home"/></svg></button>
        <button aria-label="Design library"><svg><use href="#t-books"/></svg></button>
        <button aria-label="File explorer"><svg><use href="#t-folder"/></svg></button>
        <button aria-label="View palette"><svg><use href="#t-palette"/></svg></button>
        <button class="current" aria-label="Appearances"><svg><use href="#wheel"/></svg></button>
        <button aria-label="Custom properties"><svg><use href="#list"/></svg></button>
      </div>
      <div class="watermark"><strong>Activate Windows</strong><span>Go to Settings to activate Windows.</span></div>
    </section>

    <aside class="side-tools">
      <button aria-label="Front" disabled><svg><use href="#r-off"/></svg></button>
      <button aria-label="Back" disabled><svg><use href="#r-off"/></svg></button>
      <button aria-label="Left" disabled><svg><use href="#r-off"/></svg></button>
      <button aria-label="Right" disabled><svg><use href="#r-off"/></svg></button>
      <button aria-label="Top" disabled><svg><use href="#r-off"/></svg></button>
      <button aria-label="Bottom" disabled><svg><use href="#r-off"/></svg></button>
      <button aria-label="Isometric" disabled><svg><use href="#r-off"/></svg></button>
      <hr>
      <button aria-label="Edit image"><svg><use href="#r-image"/></svg></button>
      <button aria-label="Edit" disabled><svg><use href="#r-off"/></svg></button>
      <button aria-label="Display"><svg><use href="#r-display"/></svg></button>
      <hr>
      <button aria-label="Copy"><svg><use href="#r-on"/></svg></button>
      <button aria-label="Arrange"><svg><use href="#r-on"/></svg></button>
      <hr>
    </aside>
  </main>

  <nav class="sheet-tabs">
    <span class="sheet-pad"></span>
    <div class="steps">
      <button aria-label="First"><svg><use href="#arrow"/></svg></button>
      <button aria-label="Previous"><svg><use href="#arrow"/></svg></button>
      <button aria-label="Next"><svg><use href="#arrow"/></svg></button>
      <button aria-label="Last"><svg><use href="#arrow"/></svg></button>
    </div>
    <button class="sheet current">Model</button>
    <button class="sheet">3D Views</button>
    <button class="sheet">Motion Study 1</button>
  </nav>

  <footer class="statusbar">
    <svg class="status-icon"><use href="#instant"/></svg>
    <span class="units">MMGS</span>
    <svg class="up"><use href="#caret"/></svg>
    <svg class="tag"><use href="#boundary"/></svg>
  </footer>

  <div class="taskbar">
    <div class="apps">
      <button aria-label="Start"><svg><use href="#k-win"/></svg></button>
      <button aria-label="Search"><svg><use href="#k-search"/></svg></button>
      <button aria-label="Task view"><svg><use href="#k-tasks"/></svg></button>
      <button aria-label="Copilot"><svg><use href="#k-copilot"/></svg></button>
      <button class="running" aria-label="File Explorer"><svg><use href="#k-folder"/></svg></button>
      <button aria-label="Download manager"><svg><use href="#k-idm"/></svg></button>
      <button aria-label="Media player"><svg><use href="#k-vlc"/></svg></button>
      <button aria-label="Game"><svg><use href="#k-game"/></svg></button>
      <button aria-label="Chrome"><svg><use href="#k-chrome"/></svg></button>
      <button class="running" aria-label="Chrome profile"><svg><use href="#k-chrome"/></svg></button>
      <button class="focused" aria-label="SolidWorks"><svg><use href="#k-sw"/></svg></button>
    </div>
    <div class="tray">
      <svg class="weather"><use href="#k-weather"/></svg>
      <span class="temp">14°C&nbsp; Smoke</span>
      <svg><use href="#k-up"/></svg>
      <svg><use href="#k-meet"/></svg>
      <svg><use href="#k-net"/></svg>
      <svg><use href="#k-mute"/></svg>
      <time>11:45 PM<br>2/16/2025</time>
      <button class="notes" aria-label="Notifications"><svg><use href="#k-note"/></svg><b>2</b></button>
    </div>
  </div>
</div>
</body>
</html>
```
FILE: styles.css
```
* { box-sizing: border-box; }

body {
  margin: 0;
  overflow: hidden;
  background: #474747;
  color: #e8e8e8;
  font: 6px/7px "Open Sans", "Noto Sans", sans-serif;
  text-rendering: geometricPrecision;
}

button {
  margin: 0;
  padding: 0;
  border: 0;
  background: none;
  color: inherit;
  font: inherit;
  text-rendering: inherit;
  white-space: nowrap;
}

ul { margin: 0; padding: 0; list-style: none; }
svg { display: block; flex: none; width: 10px; height: 10px; }
.defs { position: absolute; width: 0; height: 0; }
.drop { width: 8px; height: 6px; }
.off, .tool.off { color: #777; }

.app { display: flex; flex-direction: column; height: 100vh; }

/* Title bar */
.titlebar {
  position: relative;
  z-index: 10;
  display: flex;
  align-items: center;
  height: 18px;
  border-top: 1px solid #777;
  border-bottom: 1px solid #5e5e5e;
}
.brand { display: flex; align-items: center; gap: 2px; width: 67px; padding-left: 2px; }
.mark { width: 11px; height: 11px; }
.wordmark { color: #f4f4f4; font-size: 7px; font-style: italic; }
.menubar { display: flex; height: 100%; align-items: center; width: 143px; border-right: 1px solid #5e5e5e; }
.menubar > button, .menu-host > button { height: 12px; padding: 0 4px; }
.menu-host { position: relative; }
.menu-host .open { background: #5c5c5c; }
.menubar .pin { margin-left: auto; padding: 0 2px; }
.pin svg { width: 8px; height: 8px; }

.menu {
  position: absolute;
  border: 1px solid #8a8a8a;
  background: #474747;
  box-shadow: 1px 1px 1px #555;
}
.menu li { position: relative; }
.menu-view { top: 16px; left: 0; width: 115px; }
.menu-lights { top: -1px; left: 100%; width: 104px; }
.menu-props { top: -1px; left: calc(100% - 1px); width: 80px; }
.menu button { display: flex; align-items: center; width: 100%; height: 12px; padding-right: 2px; }
.menu button > svg:first-child { margin: 0 3px 0 2px; }
.menu button > span { flex: 1; text-align: left; }
.menu button > span:first-child { margin-left: 15px; }
.menu .active { background: #5a5a5a; }
.menu .more { width: 5px; height: 5px; }
.menu kbd { margin-right: 9px; font: inherit; }
.menu .sep { height: 1px; margin: 2px 3px 2px 15px; background: #7a7a7a; }

.quick { display: flex; align-items: center; gap: 2px; height: 100%; padding-left: 9px; }
.quick button { display: flex; align-items: center; width: 20px; height: 100%; padding-left: 1px; }
.quick button > svg:first-child { width: 10px; height: 10px; margin-right: 1px; }
.quick .home { width: 13px; }
.quick .lone { width: 13px; }
.quick .pressed { width: 21px; background: linear-gradient(90deg, #222 15px, #3a3a3a 15px); }
h1 { flex: 1; margin: 0; font: 6px/7px Lato, "Open Sans", sans-serif; text-align: center; color: #d0d0d0; }
.search { display: flex; align-items: center; gap: 2px; width: 101px; height: 12px; padding: 0 2px; background: #fff; color: #777; }
.search svg { width: 8px; height: 8px; }
.search .drop { width: 6px; }
.search input { flex: 1; min-width: 0; height: 10px; padding: 0 1px; border: 0; outline: 0; background: none; font: inherit; text-rendering: inherit; color: #555; }
.search input::placeholder { color: #666; opacity: 1; }
.window-buttons { display: flex; width: 93px; padding: 0 2px; }
.window-buttons button { display: grid; flex: 1; place-items: center; }
.window-buttons svg { width: 8px; height: 8px; }
.window-buttons .round { width: 10px; height: 10px; }

/* Ribbon */
.ribbon { position: relative; display: flex; height: 40px; font-family: Lato, "Open Sans", sans-serif; }
.group { display: flex; gap: 4px; padding: 0 2px; border-right: 1px solid #686868; }
.tool { position: relative; display: block; align-self: flex-start; padding-top: 2px; text-align: center; }
.tool > svg:first-child { margin: 0 auto; }
.tool .drop { position: absolute; top: 30px; left: calc(50% - 4px); }
.stack button { display: flex; align-items: center; gap: 3px; height: 13px; }
.boss { width: 216px; padding: 0 0 0 5px; border: 0; overflow: hidden; }
.cuts { width: 53px; padding: 0; }
.cuts .stack button { gap: 1px; }
.features { width: 115px; }
.features .stack { width: 28px; }
.last { border: 0; }
.collapse { margin: auto 2px 2px auto; }

/* Workspace */
.workspace { position: relative; display: grid; grid-template-columns: 115px 1fr 17px; flex: 1; min-height: 0; }
.feature-tabs {
  position: absolute;
  z-index: 2;
  top: 0;
  left: 0;
  display: flex;
  width: 370px;
  height: 12px;
  border-top: 1px solid #5c5c5c;
  background: #2e2e2e;
}
.feature-tabs button { padding: 0 4px; border-right: 1px solid #555; }
.feature-tabs .grow { flex: 1; text-align: left; }
.feature-tabs .short { width: 27px; }
.feature-tabs .current { background: #474747; font-weight: bold; }

.panel { display: flex; flex-direction: column; min-width: 0; padding-top: 12px; border-left: 1px solid #777; background: #474747; border-right: 1px solid #666; }
.splitter { display: grid; place-items: center; height: 10px; border-top: 1px solid #aaa; border-bottom: 1px solid #888; }
.splitter i, .panel-handle i { width: 3px; height: 3px; border-radius: 50%; background: #ddd; }
.panel-tabs { display: flex; height: 15px; background: #333; }
.panel-tabs button { display: grid; place-items: center; width: 20px; border-right: 1px solid #1f1f1f; background: #2b2b2b; }
.panel-tabs .current { background: #474747; }
.filter { height: 13px; padding: 2px; background: #5a5a5a; }
.tree li { position: relative; display: flex; align-items: center; gap: 2px; height: 11px; padding-left: 13px; overflow: hidden; white-space: nowrap; }
.tree svg { width: 9px; height: 9px; }
.tree .root { padding-left: 1px; }
.tree .branch::before { content: ""; position: absolute; left: 4px; border: 2px solid transparent; border-left: 3px solid #eee; border-right: 0; }
.rollback { height: 2px; background: #3f86ad; }
.scrollbar { display: flex; align-items: center; justify-content: space-between; height: 9px; margin-top: auto; margin-bottom: 2px; background: #f0f0f0; }
.scrollbar svg { width: 7px; height: 7px; }
.scrollbar i { width: 59px; height: 7px; margin-right: auto; background: #cdcdcd; }

.viewport { position: relative; min-width: 0; background: #fefefe; overflow: hidden; }
.model { width: 100%; height: 100%; }
.triad { font-size: 6px; }
.view-tools { position: absolute; top: 1px; left: calc(50% - 135px); display: flex; color: #777; }
.view-tools button { display: flex; align-items: center; justify-content: center; width: 13px; height: 14px; }
.view-tools .split { width: 20px; }
.view-tools .pressed { border: 1px solid #666; background: #b8c4ca; }
.view-tools svg { width: 10px; height: 10px; }
.view-tools .drop { width: 7px; height: 5px; margin-left: 2px; }
.doc-buttons { position: absolute; top: 4px; right: 3px; display: flex; color: #8a8a8a; }
.doc-buttons button { display: grid; place-items: center; width: 13px; }
.doc-buttons svg { width: 8px; height: 8px; }
.panel-handle { position: absolute; top: 213px; left: 0; display: grid; place-items: center; width: 4px; height: 19px; background: #444; }
.task-tabs { position: absolute; top: 38px; right: 0; width: 12px; background: #222; }
.task-tabs button { display: grid; place-items: center; width: 12px; height: 12px; border-bottom: 1px solid #555; }
.task-tabs .current { background: #bdbdbd; }
.watermark { position: absolute; right: 28px; bottom: 8px; color: #adadad; font-size: 7px; line-height: 9px; }
.watermark strong, .watermark span { display: block; font-weight: normal; }
.watermark strong { font-size: 10px; line-height: 14px; }

.side-tools { display: flex; flex-direction: column; align-items: center; padding-top: 4px; border-top: 2px dotted #777; background: #474747; }
.side-tools button { height: 13px; }
.side-tools hr { width: 100%; height: 1px; margin: 1px 0 2px; border: 0; background: #666; }

/* Bottom bars */
.sheet-tabs { display: flex; height: 8px; background: #474747; }
.sheet-pad { width: 13px; background: #a8b0b0; }
.steps { display: flex; width: 33px; background: #8a8a8a; }
.steps button { display: grid; flex: 1; place-items: center; border-right: 1px solid #999; color: #666; }
.steps svg { width: 4px; height: 4px; }
.sheet { padding: 0 5px; border-right: 1px solid #6c6c6c; background: #333; line-height: 8px; }
.sheet.current { background: #474747; font-weight: bold; }

.statusbar { display: flex; align-items: center; height: 9px; padding-right: 2px; border-top: 1px solid #777; }
.statusbar svg { width: 8px; height: 8px; }
.status-icon { margin-left: auto; }
.units { margin-left: 38px; }
.statusbar .up { width: 6px; height: 6px; margin: 0 11px 0 7px; transform: rotate(180deg); }

.taskbar { display: flex; justify-content: space-between; height: 20px; background: linear-gradient(90deg, #2a2d2c 0, #38291f 25%, #3b2c20 60%, #2b281a 85%, #2a2a20 100%); }
.apps { display: grid; grid-template-columns: repeat(11, 1fr); width: 270px; }
.apps button { display: grid; place-items: center; border-bottom: 1px solid transparent; }
.apps svg { width: 12px; height: 12px; }
.apps .running { border-color: #76b9ed; }
.apps .focused { border-color: #76b9ed; background: #5b4f47; }
.tray { display: flex; align-items: center; gap: 4px; padding-right: 8px; }
.tray svg { width: 8px; height: 8px; }
.tray .weather { width: 12px; height: 12px; }
.temp { margin-right: 5px; font-size: 7px; }
time { width: 32px; line-height: 9px; text-align: center; }
.notes { position: relative; margin-left: 4px; }
.tray .notes svg { width: 10px; height: 10px; }
.notes b { position: absolute; right: -4px; bottom: -3px; width: 7px; height: 7px; border-radius: 50%; background: #444; text-align: center; }
```
